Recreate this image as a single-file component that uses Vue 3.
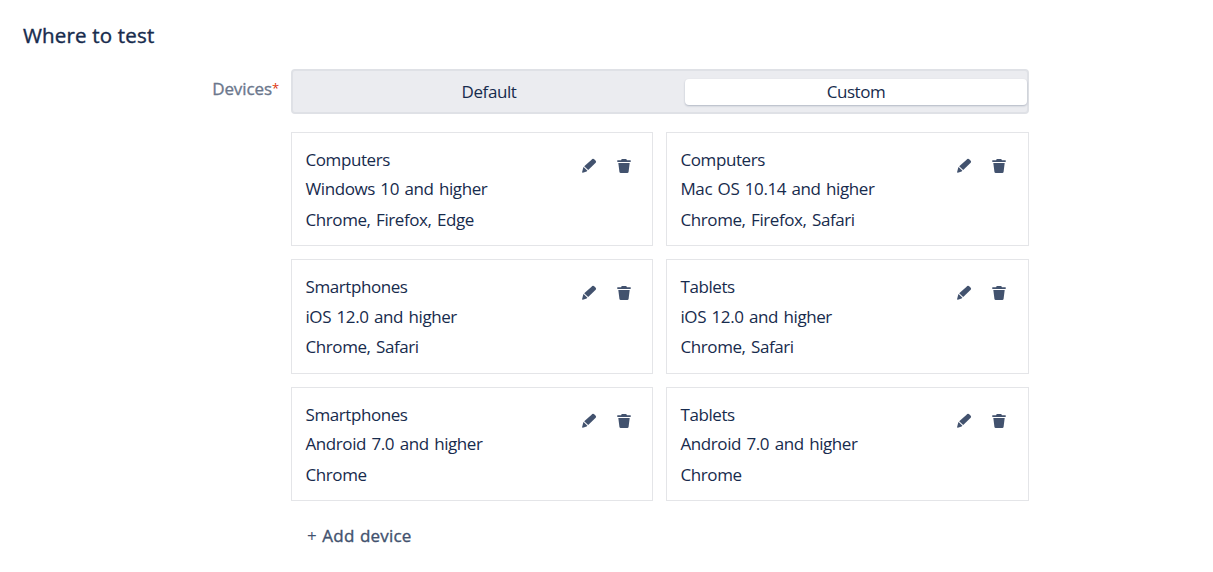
<script setup>
const devices = [
  { kind: 'Computers', os: 'Windows 10 and higher', browsers: 'Chrome, Firefox, Edge' },
  { kind: 'Computers', os: 'Mac OS 10.14 and higher', browsers: 'Chrome, Firefox, Safari' },
  { kind: 'Smartphones', os: 'iOS 12.0 and higher', browsers: 'Chrome, Safari' },
  { kind: 'Tablets', os: 'iOS 12.0 and higher', browsers: 'Chrome, Safari' },
  { kind: 'Smartphones', os: 'Android 7.0 and higher', browsers: 'Chrome' },
  { kind: 'Tablets', os: 'Android 7.0 and higher', browsers: 'Chrome' },
]
</script>

<template>
  <main class="page">
    <h2 class="title">Where to test</h2>
    <div class="field">
      <div class="label">Devices<span class="req">*</span></div>
      <div class="control">
        <div class="toggle">
          <button class="option">Default</button>
          <button class="option selected">Custom</button>
        </div>
        <div class="cards">
          <section v-for="(d, i) in devices" :key="i" class="card">
            <div class="info">
              <p>{{ d.kind }}</p>
              <p class="os">{{ d.os }}</p>
              <p>{{ d.browsers }}</p>
            </div>
            <div class="actions">
              <svg width="16" height="16" viewBox="0 0 16 16" aria-label="Edit">
                <path d="M10.3 1.9 11.2 1.1Q12.2.4 13.2 1.2L14.7 2.7Q15.5 3.7 14.7 4.7L7.2 12.1 3.2 8.3Z" />
                <path d="M2.6 9 6.4 12.8 5.6 13.4 1.8 14.8Q1 14.9 1.1 14.1L2.2 9.8Z" />
              </svg>
              <svg width="16" height="16" viewBox="0 0 16 16" aria-label="Delete">
                <path d="M1.3 2.2H5.1Q5.3 1.1 6.3 1.1H9.7Q10.7 1.1 10.9 2.2H14.7V4H1.3Z" />
                <path d="M2.3 5H13.7L12.6 13.8Q12.4 15 11.3 15H4.7Q3.6 15 3.4 13.8Z" />
              </svg>
            </div>
          </section>
        </div>
        <button class="add"><span class="plus">+</span> Add device</button>
      </div>
    </div>
  </main>
</template>

<style>
body { margin: 0; background: #fff; }
</style>

<style scoped>
.page {
  box-sizing: border-box;
  width: 1213px;
  height: 572px;
  padding: 20px 0 0 23px;
  overflow: hidden;
  font-family: "Open Sans", "Noto Sans", sans-serif;
  font-size: 17px;
  font-weight: 400;
  letter-spacing: -0.42px;
  word-spacing: 1.5px;
  color: #172b4d;
}
.title { margin: 0; height: 49px; font-size: 20.5px; line-height: 30px; font-weight: 500; letter-spacing: 0.18px; word-spacing: 0; -webkit-text-stroke: 0.4px currentColor; }
.field { display: flex; gap: 12px; }
.label { width: 256px; text-align: right; line-height: 24px; padding-top: 8px; font-weight: 500; letter-spacing: -0.1px; color: #6b778c; -webkit-text-stroke: 0.35px currentColor; }
.req { color: #de350b; font-size: 13px; vertical-align: 2px; line-height: 1; -webkit-text-stroke: 0; }
.control { width: 738px; }
button { border: 0; padding: 0; background: none; font: inherit; letter-spacing: inherit; word-spacing: inherit; color: inherit; }
.toggle {
  box-sizing: border-box;
  display: flex;
  align-items: center;
  height: 45px;
  border: 2px solid #dfe1e6;
  border-radius: 4px;
  background: #ebecf0;
}
.option { flex: none; width: 392px; height: 26px; line-height: 26px; }
.option.selected { width: 342px; border-radius: 4px; background: #fff; box-shadow: 0 1px 2px #091e4240; }
.cards { display: grid; grid-template-columns: 362px 363px; grid-template-rows: 114px 115px 114px; gap: 13px; margin-top: 18px; }
.card { box-sizing: border-box; display: flex; justify-content: space-between; border: 1px solid #e4e5e8; padding: 12px 20px 0 13.5px; }
.card:nth-child(even) { padding-right: 21px; }
.info p { margin: 0; line-height: 30px; white-space: nowrap; }
.info .os { margin: -1px 0 1px; }
.card:nth-child(3) .os, .card:nth-child(4) .os { margin: 0; }
.actions { display: flex; gap: 19px; padding-top: 13px; }
.actions svg { fill: #42526e; display: block; }
.add { display: block; margin: 23px 0 0 16px; line-height: 24px; font-weight: 500; letter-spacing: 0.2px; word-spacing: 0.8px; color: #42526e; -webkit-text-stroke: 0.35px currentColor; }
.plus { -webkit-text-stroke: 0; }
</style>
